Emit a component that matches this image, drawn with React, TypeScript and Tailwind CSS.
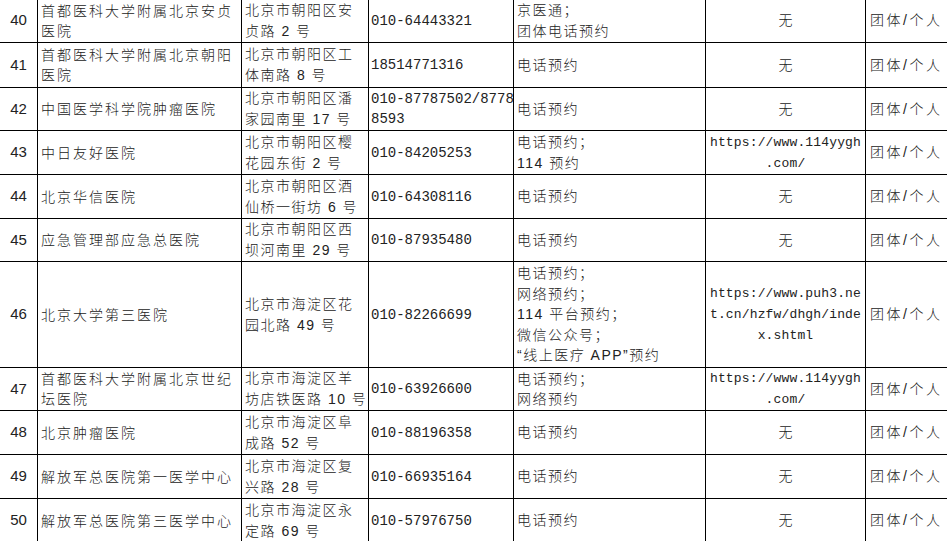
import React from "react";

type Row = {
  n: number;
  h: number;
  name: string[];
  addr: string[];
  phone: string[];
  book: string[];
  web: string[] | null;
};

const rows: Row[] = [
  { n: 40, h: 44, name: ["首都医科大学附属北京安贞", "医院"], addr: ["北京市朝阳区安", "贞路 2 号"], phone: ["010-64443321"], book: ["京医通；", "团体电话预约"], web: null },
  { n: 41, h: 45, name: ["首都医科大学附属北京朝阳", "医院"], addr: ["北京市朝阳区工", "体南路 8 号"], phone: ["18514771316"], book: ["电话预约"], web: null },
  { n: 42, h: 43, name: ["中国医学科学院肿瘤医院"], addr: ["北京市朝阳区潘", "家园南里 17 号"], phone: ["010-87787502/8778", "8593"], book: ["电话预约"], web: null },
  { n: 43, h: 44, name: ["中日友好医院"], addr: ["北京市朝阳区樱", "花园东街 2 号"], phone: ["010-84205253"], book: ["电话预约；", "114 预约"], web: ["https://www.114yygh", ".com/"] },
  { n: 44, h: 44, name: ["北京华信医院"], addr: ["北京市朝阳区酒", "仙桥一街坊 6 号"], phone: ["010-64308116"], book: ["电话预约"], web: null },
  { n: 45, h: 43, name: ["应急管理部应急总医院"], addr: ["北京市朝阳区西", "坝河南里 29 号"], phone: ["010-87935480"], book: ["电话预约"], web: null },
  { n: 46, h: 106, name: ["北京大学第三医院"], addr: ["北京市海淀区花", "园北路 49 号"], phone: ["010-82266699"], book: ["电话预约；", "网络预约；", "114 平台预约；", "微信公众号；", "“线上医疗 APP”预约"], web: ["https://www.puh3.ne", "t.cn/hzfw/dhgh/inde", "x.shtml"] },
  { n: 47, h: 43, name: ["首都医科大学附属北京世纪", "坛医院"], addr: ["北京市海淀区羊", "坊店铁医路 10 号"], phone: ["010-63926600"], book: ["电话预约；", "网络预约"], web: ["https://www.114yygh", ".com/"] },
  { n: 48, h: 44, name: ["北京肿瘤医院"], addr: ["北京市海淀区阜", "成路 52 号"], phone: ["010-88196358"], book: ["电话预约"], web: null },
  { n: 49, h: 44, name: ["解放军总医院第一医学中心"], addr: ["北京市海淀区复", "兴路 28 号"], phone: ["010-66935164"], book: ["电话预约"], web: null },
  { n: 50, h: 44, name: ["解放军总医院第三医学中心"], addr: ["北京市海淀区永", "定路 69 号"], phone: ["010-57976750"], book: ["电话预约"], web: null },
];

const cjk = "font-['Liberation_Sans','Noto_Sans_CJK_SC',sans-serif]";
const cell = "border border-black align-middle p-0 text-[#222]";

const Lines = ({ lines, className }: { lines: string[]; className?: string }) => (
  <div className={className}>
    {lines.map((l, i) => (
      <div key={i} className="whitespace-pre">
        {l}
      </div>
    ))}
  </div>
);

export default function App() {
  return (
    <div className="w-[947px] h-[541px] overflow-hidden bg-white">
      <table className="table-fixed border-collapse w-[949px] -mt-[2px] -ml-px">
        <colgroup>
          <col className="w-[38px]" />
          <col className="w-[204px]" />
          <col className="w-[127px]" />
          <col className="w-[145px]" />
          <col className="w-[192px]" />
          <col className="w-[160px]" />
          <col className="w-[83px]" />
        </colgroup>
        <tbody>
          {rows.map((r) => (
            <tr key={r.n} style={{ height: r.h }}>
              <td className={`${cell} text-center font-['Liberation_Sans',sans-serif] text-[15px]`}>{r.n}</td>
              <td className={cell}>
                <Lines lines={r.name} className={`${cjk} pl-[3px] text-[14px] leading-[20px] tracking-[2px] font-light`} />
              </td>
              <td className={cell}>
                <Lines lines={r.addr} className={`${cjk} pl-[3px] text-[14px] leading-[21px] tracking-[1.5px] font-light`} />
              </td>
              <td className={cell}>
                <Lines lines={r.phone} className="font-['Liberation_Mono',monospace] pl-[2px] text-[14px] leading-[20px]" />
              </td>
              <td className={cell}>
                <Lines lines={r.book} className={`${cjk} pl-[3px] text-[14px] leading-[20.5px] tracking-[1.5px] font-light`} />
              </td>
              <td className={cell}>
                {r.web ? (
                  <Lines lines={r.web} className="font-['Liberation_Mono',monospace] text-center text-[13px] tracking-[0.15px] leading-[21px]" />
                ) : (
                  <div className={`${cjk} text-center text-[14px] font-light`}>无</div>
                )}
              </td>
              <td className={cell}>
                <div className={`${cjk} pl-[4px] text-[14px] tracking-[2.5px] font-light whitespace-nowrap`}>团体/个人</div>
              </td>
            </tr>
          ))}
        </tbody>
      </table>
    </div>
  );
}
